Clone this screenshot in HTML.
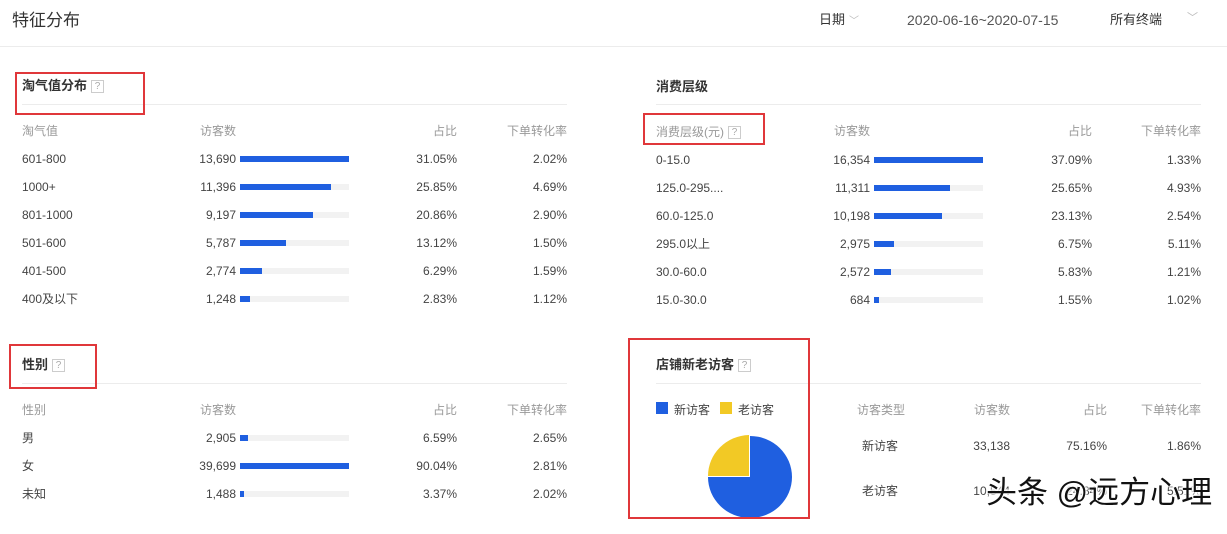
<!DOCTYPE html>
<html><head><meta charset="utf-8"><style>
*{margin:0;padding:0;box-sizing:border-box}
body{width:1227px;height:534px;background:#fff;position:relative;overflow:hidden;font-family:"Liberation Sans","Noto Sans CJK SC",sans-serif;color:#444;font-size:12px}
.a{position:absolute;line-height:16px;white-space:nowrap}
.r{text-align:right;width:120px}
.g{color:#999}
.h{font-weight:bold;font-size:13px;color:#333}
.q{display:inline-block;width:13px;height:13px;border:1px solid #ccc;color:#aaa;font-size:10px;line-height:11px;text-align:center;margin-left:4px;vertical-align:middle;font-weight:normal}
.ln{position:absolute;height:1px;background:#ececec}
.tr{position:absolute;height:6px;width:109px;background:#f2f2f2}
.b{position:absolute;left:0;top:0;height:6px;background:#1f5fe0}
.box{position:absolute;border:2px solid #e0373a}
</style></head><body>
<div class="a" style="left:12px;top:11px;font-size:17px;line-height:20px;color:#333">特征分布</div>
<div class="a" style="left:819px;top:12px;font-size:13px;color:#333">日期<span style="color:#bbb;font-size:10px;margin-left:4px">﹀</span></div>
<div class="a" style="left:907px;top:12px;font-size:14px;color:#555">2020-06-16~2020-07-15</div>
<div class="a" style="left:1110px;top:12px;font-size:13px;color:#333">所有终端</div>
<div class="a" style="left:1187px;top:10px;color:#bbb;font-size:11px">﹀</div>
<div class="ln" style="left:0;top:46px;width:1227px"></div>

<!-- left top -->
<div class="a h" style="left:22px;top:78px">淘气值分布<span class="q">?</span></div>
<div class="ln" style="left:22px;top:104px;width:545px"></div>
<div class="a g" style="left:22px;top:123px">淘气值</div>
<div class="a g" style="left:200px;top:123px">访客数</div>
<div class="a g r" style="left:337px;top:123px">占比</div>
<div class="a g r" style="left:447px;top:123px">下单转化率</div>

<div class="a" style="left:22px;top:151px">601-800</div><div class="a r" style="left:116px;top:151px">13,690</div><div class="tr" style="left:240px;top:156px"><div class="b" style="width:109px"></div></div><div class="a r" style="left:337px;top:151px">31.05%</div><div class="a r" style="left:447px;top:151px">2.02%</div>
<div class="a" style="left:22px;top:179px">1000+</div><div class="a r" style="left:116px;top:179px">11,396</div><div class="tr" style="left:240px;top:184px"><div class="b" style="width:91px"></div></div><div class="a r" style="left:337px;top:179px">25.85%</div><div class="a r" style="left:447px;top:179px">4.69%</div>
<div class="a" style="left:22px;top:207px">801-1000</div><div class="a r" style="left:116px;top:207px">9,197</div><div class="tr" style="left:240px;top:212px"><div class="b" style="width:73px"></div></div><div class="a r" style="left:337px;top:207px">20.86%</div><div class="a r" style="left:447px;top:207px">2.90%</div>
<div class="a" style="left:22px;top:235px">501-600</div><div class="a r" style="left:116px;top:235px">5,787</div><div class="tr" style="left:240px;top:240px"><div class="b" style="width:46px"></div></div><div class="a r" style="left:337px;top:235px">13.12%</div><div class="a r" style="left:447px;top:235px">1.50%</div>
<div class="a" style="left:22px;top:263px">401-500</div><div class="a r" style="left:116px;top:263px">2,774</div><div class="tr" style="left:240px;top:268px"><div class="b" style="width:22px"></div></div><div class="a r" style="left:337px;top:263px">6.29%</div><div class="a r" style="left:447px;top:263px">1.59%</div>
<div class="a" style="left:22px;top:291px">400及以下</div><div class="a r" style="left:116px;top:291px">1,248</div><div class="tr" style="left:240px;top:296px"><div class="b" style="width:10px"></div></div><div class="a r" style="left:337px;top:291px">2.83%</div><div class="a r" style="left:447px;top:291px">1.12%</div>

<!-- right top -->
<div class="a h" style="left:656px;top:79px">消费层级</div>
<div class="ln" style="left:656px;top:104px;width:545px"></div>
<div class="a g" style="left:656px;top:124px">消费层级(元)<span class="q">?</span></div>
<div class="a g" style="left:834px;top:123px">访客数</div>
<div class="a g r" style="left:972px;top:123px">占比</div>
<div class="a g r" style="left:1081px;top:123px">下单转化率</div>

<div class="a" style="left:656px;top:152px">0-15.0</div><div class="a r" style="left:750px;top:152px">16,354</div><div class="tr" style="left:874px;top:157px"><div class="b" style="width:109px"></div></div><div class="a r" style="left:972px;top:152px">37.09%</div><div class="a r" style="left:1081px;top:152px">1.33%</div>
<div class="a" style="left:656px;top:180px">125.0-295....</div><div class="a r" style="left:750px;top:180px">11,311</div><div class="tr" style="left:874px;top:185px"><div class="b" style="width:76px"></div></div><div class="a r" style="left:972px;top:180px">25.65%</div><div class="a r" style="left:1081px;top:180px">4.93%</div>
<div class="a" style="left:656px;top:208px">60.0-125.0</div><div class="a r" style="left:750px;top:208px">10,198</div><div class="tr" style="left:874px;top:213px"><div class="b" style="width:68px"></div></div><div class="a r" style="left:972px;top:208px">23.13%</div><div class="a r" style="left:1081px;top:208px">2.54%</div>
<div class="a" style="left:656px;top:236px">295.0以上</div><div class="a r" style="left:750px;top:236px">2,975</div><div class="tr" style="left:874px;top:241px"><div class="b" style="width:20px"></div></div><div class="a r" style="left:972px;top:236px">6.75%</div><div class="a r" style="left:1081px;top:236px">5.11%</div>
<div class="a" style="left:656px;top:264px">30.0-60.0</div><div class="a r" style="left:750px;top:264px">2,572</div><div class="tr" style="left:874px;top:269px"><div class="b" style="width:17px"></div></div><div class="a r" style="left:972px;top:264px">5.83%</div><div class="a r" style="left:1081px;top:264px">1.21%</div>
<div class="a" style="left:656px;top:292px">15.0-30.0</div><div class="a r" style="left:750px;top:292px">684</div><div class="tr" style="left:874px;top:297px"><div class="b" style="width:5px"></div></div><div class="a r" style="left:972px;top:292px">1.55%</div><div class="a r" style="left:1081px;top:292px">1.02%</div>

<!-- gender -->
<div class="a h" style="left:22px;top:357px">性别<span class="q">?</span></div>
<div class="ln" style="left:22px;top:383px;width:545px"></div>
<div class="a g" style="left:22px;top:402px">性别</div>
<div class="a g" style="left:200px;top:402px">访客数</div>
<div class="a g r" style="left:337px;top:402px">占比</div>
<div class="a g r" style="left:447px;top:402px">下单转化率</div>
<div class="a" style="left:22px;top:430px">男</div><div class="a r" style="left:116px;top:430px">2,905</div><div class="tr" style="left:240px;top:435px"><div class="b" style="width:8px"></div></div><div class="a r" style="left:337px;top:430px">6.59%</div><div class="a r" style="left:447px;top:430px">2.65%</div>
<div class="a" style="left:22px;top:458px">女</div><div class="a r" style="left:116px;top:458px">39,699</div><div class="tr" style="left:240px;top:463px"><div class="b" style="width:109px"></div></div><div class="a r" style="left:337px;top:458px">90.04%</div><div class="a r" style="left:447px;top:458px">2.81%</div>
<div class="a" style="left:22px;top:486px">未知</div><div class="a r" style="left:116px;top:486px">1,488</div><div class="tr" style="left:240px;top:491px"><div class="b" style="width:4px"></div></div><div class="a r" style="left:337px;top:486px">3.37%</div><div class="a r" style="left:447px;top:486px">2.02%</div>

<!-- new/old -->
<div class="a h" style="left:656px;top:357px">店铺新老访客<span class="q">?</span></div>
<div class="ln" style="left:656px;top:383px;width:545px"></div>
<div style="position:absolute;left:656px;top:402px;width:12px;height:12px;background:#1f5fe0"></div>
<div class="a" style="left:674px;top:402px">新访客</div>
<div style="position:absolute;left:720px;top:402px;width:12px;height:12px;background:#f2c925"></div>
<div class="a" style="left:738px;top:402px">老访客</div>
<svg style="position:absolute;left:700px;top:430px" width="100" height="95">
<path d="M50 6 A42 41 0 1 1 8 47 L50 47 Z" fill="#1f5fe0"/>
<path d="M49 46 L8 46 A42 41 0 0 1 49 5 Z" fill="#f2c925"/>
</svg>
<div class="a g" style="left:857px;top:402px">访客类型</div>
<div class="a g r" style="left:890px;top:402px">访客数</div>
<div class="a g r" style="left:987px;top:402px">占比</div>
<div class="a g r" style="left:1081px;top:402px">下单转化率</div>
<div class="a" style="left:862px;top:438px">新访客</div><div class="a r" style="left:890px;top:438px">33,138</div><div class="a r" style="left:987px;top:438px">75.16%</div><div class="a r" style="left:1081px;top:438px">1.86%</div>
<div class="a" style="left:862px;top:483px">老访客</div><div class="a r" style="left:890px;top:483px">10,544</div><div class="a r" style="left:987px;top:483px">24.84%</div><div class="a r" style="left:1081px;top:483px">5.51%</div>
<div class="a" style="left:986px;top:475px;font-size:31px;line-height:36px;color:#111;text-shadow:0 0 2px #fff,0 0 3px #fff,1px 1px 2px #fff,-1px -1px 2px #fff">头条 @远方心理</div>

<div class="box" style="left:15px;top:72px;width:130px;height:43px"></div>
<div class="box" style="left:643px;top:113px;width:122px;height:32px"></div>
<div class="box" style="left:9px;top:344px;width:88px;height:45px"></div>
<div class="box" style="left:628px;top:338px;width:182px;height:181px"></div>
</body></html>
